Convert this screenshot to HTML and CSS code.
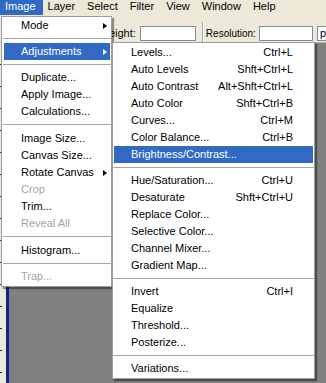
FILE: index.html
```html
<!DOCTYPE html>
<html lang="en">
<head>
    <meta charset="UTF-8">
    <meta name="viewport" content="width=device-width, initial-scale=1.0">
    <title>Image Menu</title>
    <link rel="stylesheet" href="styles.css">
</head>
<body>
    <div class="menubar">
        <span class="menubar-item active">Image</span>
        <span class="menubar-item">Layer</span>
        <span class="menubar-item">Select</span>
        <span class="menubar-item">Filter</span>
        <span class="menubar-item">View</span>
        <span class="menubar-item">Window</span>
        <span class="menubar-item">Help</span>
    </div>

    <div class="optionsbar">
        <span class="opt-label">Height:</span>
        <span class="opt-input"></span>
        <span class="opt-divider"></span>
        <span class="opt-label res">Resolution:</span>
        <span class="opt-input res-input"></span>
        <span class="opt-select">pixels/inch</span>
    </div>

    <div class="workspace">
        <div class="ruler"></div>
        <div class="doc-edge"></div>
        <div class="canvas-area"></div>
    </div>

    <!-- Image menu -->
    <div class="menu image-menu">
        <div class="item">Mode<span class="arrow"></span></div>
        <div class="sep"></div>
        <div class="item selected">Adjustments<span class="arrow"></span></div>
        <div class="sep"></div>
        <div class="item">Duplicate...</div>
        <div class="item">Apply Image...</div>
        <div class="item">Calculations...</div>
        <div class="sep wide"></div>
        <div class="item">Image Size...</div>
        <div class="item">Canvas Size...</div>
        <div class="item">Rotate Canvas<span class="arrow"></span></div>
        <div class="item disabled">Crop</div>
        <div class="item">Trim...</div>
        <div class="item disabled">Reveal All</div>
        <div class="sep wide"></div>
        <div class="item">Histogram...</div>
        <div class="sep"></div>
        <div class="item disabled">Trap...</div>
    </div>

    <!-- Adjustments submenu -->
    <div class="menu adjust-menu">
        <div class="item">Levels...<span class="key">Ctrl+L</span></div>
        <div class="item">Auto Levels<span class="key">Shft+Ctrl+L</span></div>
        <div class="item">Auto Contrast<span class="key">Alt+Shft+Ctrl+L</span></div>
        <div class="item">Auto Color<span class="key">Shft+Ctrl+B</span></div>
        <div class="item">Curves...<span class="key">Ctrl+M</span></div>
        <div class="item">Color Balance...<span class="key">Ctrl+B</span></div>
        <div class="item selected">Brightness/Contrast...</div>
        <div class="sep"></div>
        <div class="item">Hue/Saturation...<span class="key">Ctrl+U</span></div>
        <div class="item">Desaturate<span class="key">Shft+Ctrl+U</span></div>
        <div class="item">Replace Color...</div>
        <div class="item">Selective Color...</div>
        <div class="item">Channel Mixer...</div>
        <div class="item">Gradient Map...</div>
        <div class="sep"></div>
        <div class="item">Invert<span class="key">Ctrl+I</span></div>
        <div class="item">Equalize</div>
        <div class="item">Threshold...</div>
        <div class="item">Posterize...</div>
        <div class="sep"></div>
        <div class="item">Variations...</div>
    </div>
</body>
</html>
```

FILE: styles.css
```css
body {
    margin: 0;
    width: 326px;
    height: 383px;
    overflow: hidden;
    position: relative;
    font-family: "Liberation Sans", Arial, sans-serif;
    font-size: 11px;
    color: #000;
    background: #808080;
}

/* Menu bar */
.menubar {
    display: flex;
    height: 16px;
    background: #ece9d8;
}

.menubar-item {
    height: 15px;
    line-height: 13px;
    padding: 0 7px 0 5px;
    white-space: nowrap;
}

.menubar-item.active {
    background: #316ac5;
    color: #fff;
}

/* Options bar (left part sits under the open menu) */
.optionsbar {
    display: flex;
    align-items: flex-start;
    box-sizing: border-box;
    height: 27px;
    padding: 10px 0 0 101px;
    background: #ece9d8;
    border-bottom: 1px solid #b9b6a8;
    overflow: hidden;
    white-space: nowrap;
}

.optionsbar > * {
    flex-shrink: 0;
}

.opt-label {
    line-height: 15px;
    margin-right: 4px;
}

.opt-label.res {
    font-size: 10px;
    margin-right: 3px;
}

.opt-input {
    box-sizing: border-box;
    width: 56px;
    height: 15px;
    background: #fff;
    border: 1px solid #7f8c9a;
}

.res-input {
    width: 54px;
}

.opt-divider {
    width: 0;
    height: 22px;
    margin: -4px 2px 0 6px;
    border-left: 1px solid #aca899;
    border-right: 1px solid #fff;
}

.opt-select {
    box-sizing: border-box;
    height: 15px;
    line-height: 13px;
    margin-left: 4px;
    padding: 0 2px;
    background: #fff;
    border: 1px solid #7f8c9a;
}

/* Workspace behind the menus */
.workspace {
    display: flex;
    height: 340px;
}

.ruler {
    width: 6px;
    background-color: #ece9d8;
    background-image: repeating-linear-gradient(to bottom, transparent 0, transparent 21px, #222 21px, #222 22px);
    background-size: 2px 100%;
    background-repeat: no-repeat;
}

.doc-edge {
    width: 3px;
    background: #0f2486;
}

.canvas-area {
    flex: 1;
    background: #808080;
}

/* Drop-down menus */
.menu {
    position: absolute;
    box-sizing: border-box;
    background: #fff;
    border: 1px solid #9d9d9d;
    box-shadow: 2px 2px 1px rgba(0, 0, 0, 0.4);
}

.image-menu {
    left: 1px;
    top: 16px;
    width: 111px;
    padding: 0 1px 1px 2px;
}

.adjust-menu {
    left: 112px;
    top: 42px;
    width: 203px;
    padding: 1px;
}

.item {
    display: flex;
    align-items: center;
    height: 17px;
    line-height: 17px;
    padding: 0 20px 0 17px;
    white-space: nowrap;
}

.image-menu .item {
    padding-right: 3px;
}

.item.selected {
    background: #316ac5;
    color: #fff;
}

.item.disabled {
    color: #a5a5a5;
}

.key {
    margin-left: auto;
}

.arrow {
    margin-left: auto;
    width: 0;
    height: 0;
    border-left: 4px solid #000;
    border-top: 3.5px solid transparent;
    border-bottom: 3.5px solid transparent;
}

.selected .arrow {
    border-left-color: #fff;
}

.sep {
    margin: 4px -1px;
    border-top: 1px solid #a7a7a7;
}

.sep.wide {
    margin-bottom: 5px;
}
```
